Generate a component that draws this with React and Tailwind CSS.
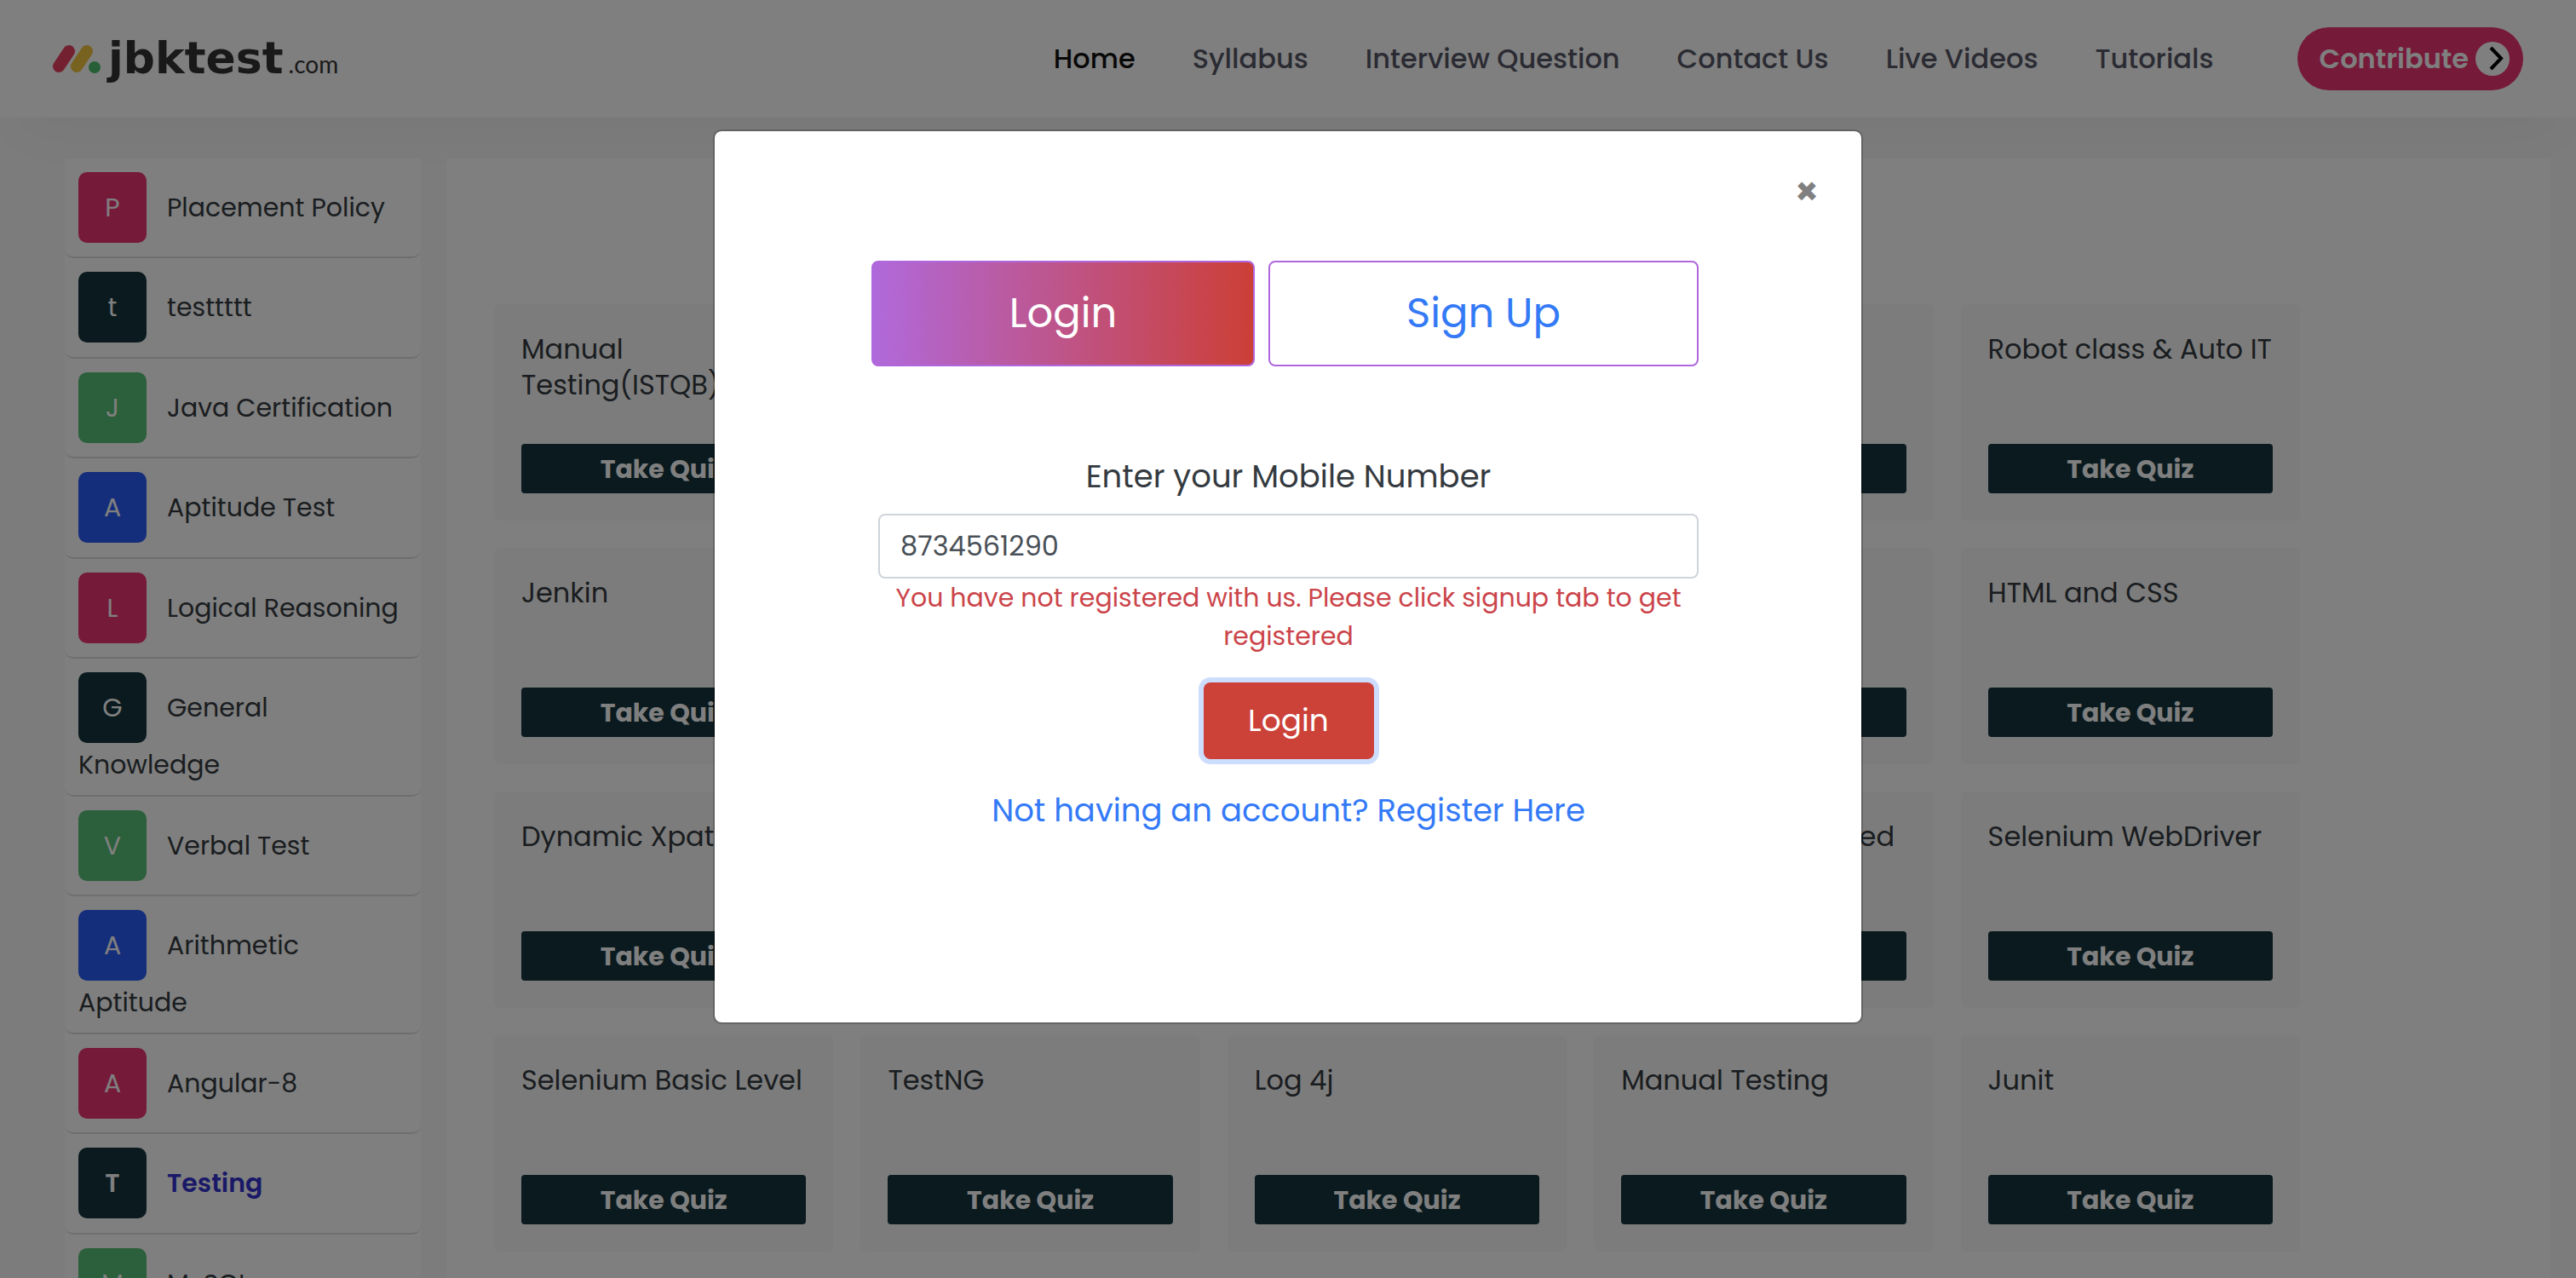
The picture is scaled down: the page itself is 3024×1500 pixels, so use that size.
const NAV = ["Home", "Syllabus", "Interview Question", "Contact Us", "Live Videos", "Tutorials"];

const PINK = "bg-[#ec3575]";
const DARK = "bg-[#15343d]";
const GREEN = "bg-[#59be76]";
const BLUE = "bg-[#2a5cf6]";

const TOPICS = [
  { name: "Placement Policy", tone: PINK },
  { name: "testtttt", tone: DARK },
  { name: "Java Certification", tone: GREEN },
  { name: "Aptitude Test", tone: BLUE },
  { name: "Logical Reasoning", tone: PINK },
  { name: "General Knowledge", tone: DARK },
  { name: "Verbal Test", tone: GREEN },
  { name: "Arithmetic Aptitude", tone: BLUE },
  { name: "Angular-8", tone: PINK },
  { name: "Testing", tone: DARK, active: true },
  { name: "MySQL", tone: GREEN },
];

const QUIZZES = [
  "Manual Testing(ISTQB)", "Selenium Grid", "Maven", "Cucumber", "Robot class & Auto IT",
  "Jenkin", "Git", "API Testing", "Postman", "HTML and CSS",
  "Dynamic Xpath", "Agile", "JUnit Basic", "Selenium Advanced", "Selenium WebDriver",
  "Selenium Basic Level", "TestNG", "Log 4j", "Manual Testing", "Junit",
];

function Logo() {
  return (
    <a href="#home" className="flex items-center gap-2" aria-label="jbktest.com">
      <svg width="58" height="36" viewBox="0 0 58 36" aria-hidden="true">
        <g strokeWidth="14" strokeLinecap="round" fill="none">
          <path d="M20 9L8 27" stroke="#e64260" />
          <path d="M41 9L29 27" stroke="#f0c440" />
        </g>
        <circle cx="50" cy="28" r="7" fill="#4cbf6c" />
      </svg>
      <span className="flex items-baseline gap-1.5 pt-1 text-[#333333]">
        <span className="font-['DejaVu_Sans',sans-serif] text-[52px] leading-[60px] font-bold">jbktest</span>
        <span className="font-[Lato,sans-serif] text-[28px] leading-[60px]">.com</span>
      </span>
    </a>
  );
}

function Header() {
  return (
    <header className="relative z-10 flex h-[138px] items-center justify-between bg-white pr-[62px] pl-[61px] shadow-[0_40px_60px_-20px_rgba(0,0,0,0.03)]">
      <Logo />
      <div className="flex items-center gap-[98px]">
        <nav className="flex gap-[67px] text-[32px] leading-[48px] font-medium text-[#565666]">
          {NAV.map((label, i) => (
            <a key={label} href="#nav" className={i === 0 ? "text-[#111111]" : ""}>{label}</a>
          ))}
        </nav>
        <button type="button" className="flex h-[74px] items-center gap-2 rounded-full bg-[#ec3575] pr-4 pl-[26px] text-[32px] font-semibold text-white">
          Contribute
          <svg width="40" height="40" viewBox="0 0 40 40" aria-hidden="true">
            <circle cx="20" cy="20" r="20" fill="#fff" />
            <path d="M18 7L30 19.5L18 32" fill="none" stroke="#000" strokeWidth="4" />
          </svg>
        </button>
      </div>
    </header>
  );
}

function Sidebar() {
  return (
    <ul className="w-[418px] shrink-0 bg-white">
      {TOPICS.map(({ name, tone, active }) => (
        <li key={name} className="rounded-[10px] border-b-2 border-[#dcdcdc] px-4 pt-4 pb-3 text-[30px] leading-[44px] text-[#343a40] even:pb-[13px]">
          <a href="#topic" className={active ? "block font-semibold text-[#3532d0]" : "block"}>
            <span className={"mr-6 mb-1 inline-flex h-[83px] w-20 items-center justify-center rounded-[10px] align-middle text-white " + tone}>{name[0]}</span>
            {name}
          </a>
        </li>
      ))}
    </ul>
  );
}

function QuizCard({ title }) {
  return (
    <article className="flex h-[254px] flex-col justify-between rounded-md bg-[#f8f8f8] px-8 py-8">
      <h2 className="text-[32px] leading-[42px] text-[#343a40]">{title}</h2>
      <button type="button" className="h-[58px] rounded bg-[#15343d] text-[30px] font-bold text-white">Take Quiz</button>
    </article>
  );
}

function LoginDialog() {
  return (
    <div role="dialog" aria-modal="true" aria-label="Login" className="relative mx-auto w-[1350px] rounded-[10px] border-2 border-black/20 bg-white bg-clip-padding pt-[152px] pr-[191px] pb-[221px] pl-[184px]">
      <button type="button" aria-label="Close" className="absolute top-[47px] right-10 h-12 w-12 text-[44px] leading-[48px] font-bold text-[#808080]">×</button>
      <div className="flex gap-4 text-[48px] leading-[120px]">
        <button type="button" className="w-[450px] rounded-lg border-2 border-[#b067dd] bg-linear-to-r/srgb from-[#b069db] to-[#cc3f36] text-white">Login</button>
        <button type="button" className="flex-1 rounded-lg border-2 border-[#b067dd] text-[#347af7]">Sign Up</button>
      </div>
      <form className="flex flex-col items-center pt-[100px] pl-2 text-center">
        <label htmlFor="mobile" className="text-[37px] leading-[58px] text-[#343a40]">Enter your Mobile Number</label>
        <input id="mobile" type="text" defaultValue="8734561290" className="mt-[15px] h-[76px] w-full rounded-lg border-2 border-[#ced4da] px-6 text-[32px] text-[#495057]" />
        <p className="px-4 text-[30px] leading-[45px] text-[#cb444a]">You have not registered with us. Please click signup tab to get registered</p>
        <button type="button" className="mt-8 h-[90px] w-[200px] rounded-lg bg-[#cc4138] text-[36px] text-white ring-[6px] ring-[#cdddfd]">Login</button>
        <a href="#register" className="mt-8 text-[37px] leading-[56px] text-[#347af7]">Not having an account? Register Here</a>
      </form>
    </div>
  );
}

export default function App() {
  return (
    <div className="relative h-screen overflow-hidden bg-[#f8f8f8] font-[Poppins,sans-serif]">
      <Header />
      <main className="flex gap-[30px] pt-12 pr-[30px] pl-[76px]">
        <Sidebar />
        <section className="flex-1 bg-white pt-[171px] pr-[294px] pb-8 pl-14">
          <div className="grid grid-cols-5 gap-8">
            {QUIZZES.map((title, i) => <QuizCard key={i} title={title} />)}
          </div>
        </section>
      </main>
      <div className="absolute inset-0 z-20 bg-black/50 pt-[152px]">
        <LoginDialog />
      </div>
    </div>
  );
}
